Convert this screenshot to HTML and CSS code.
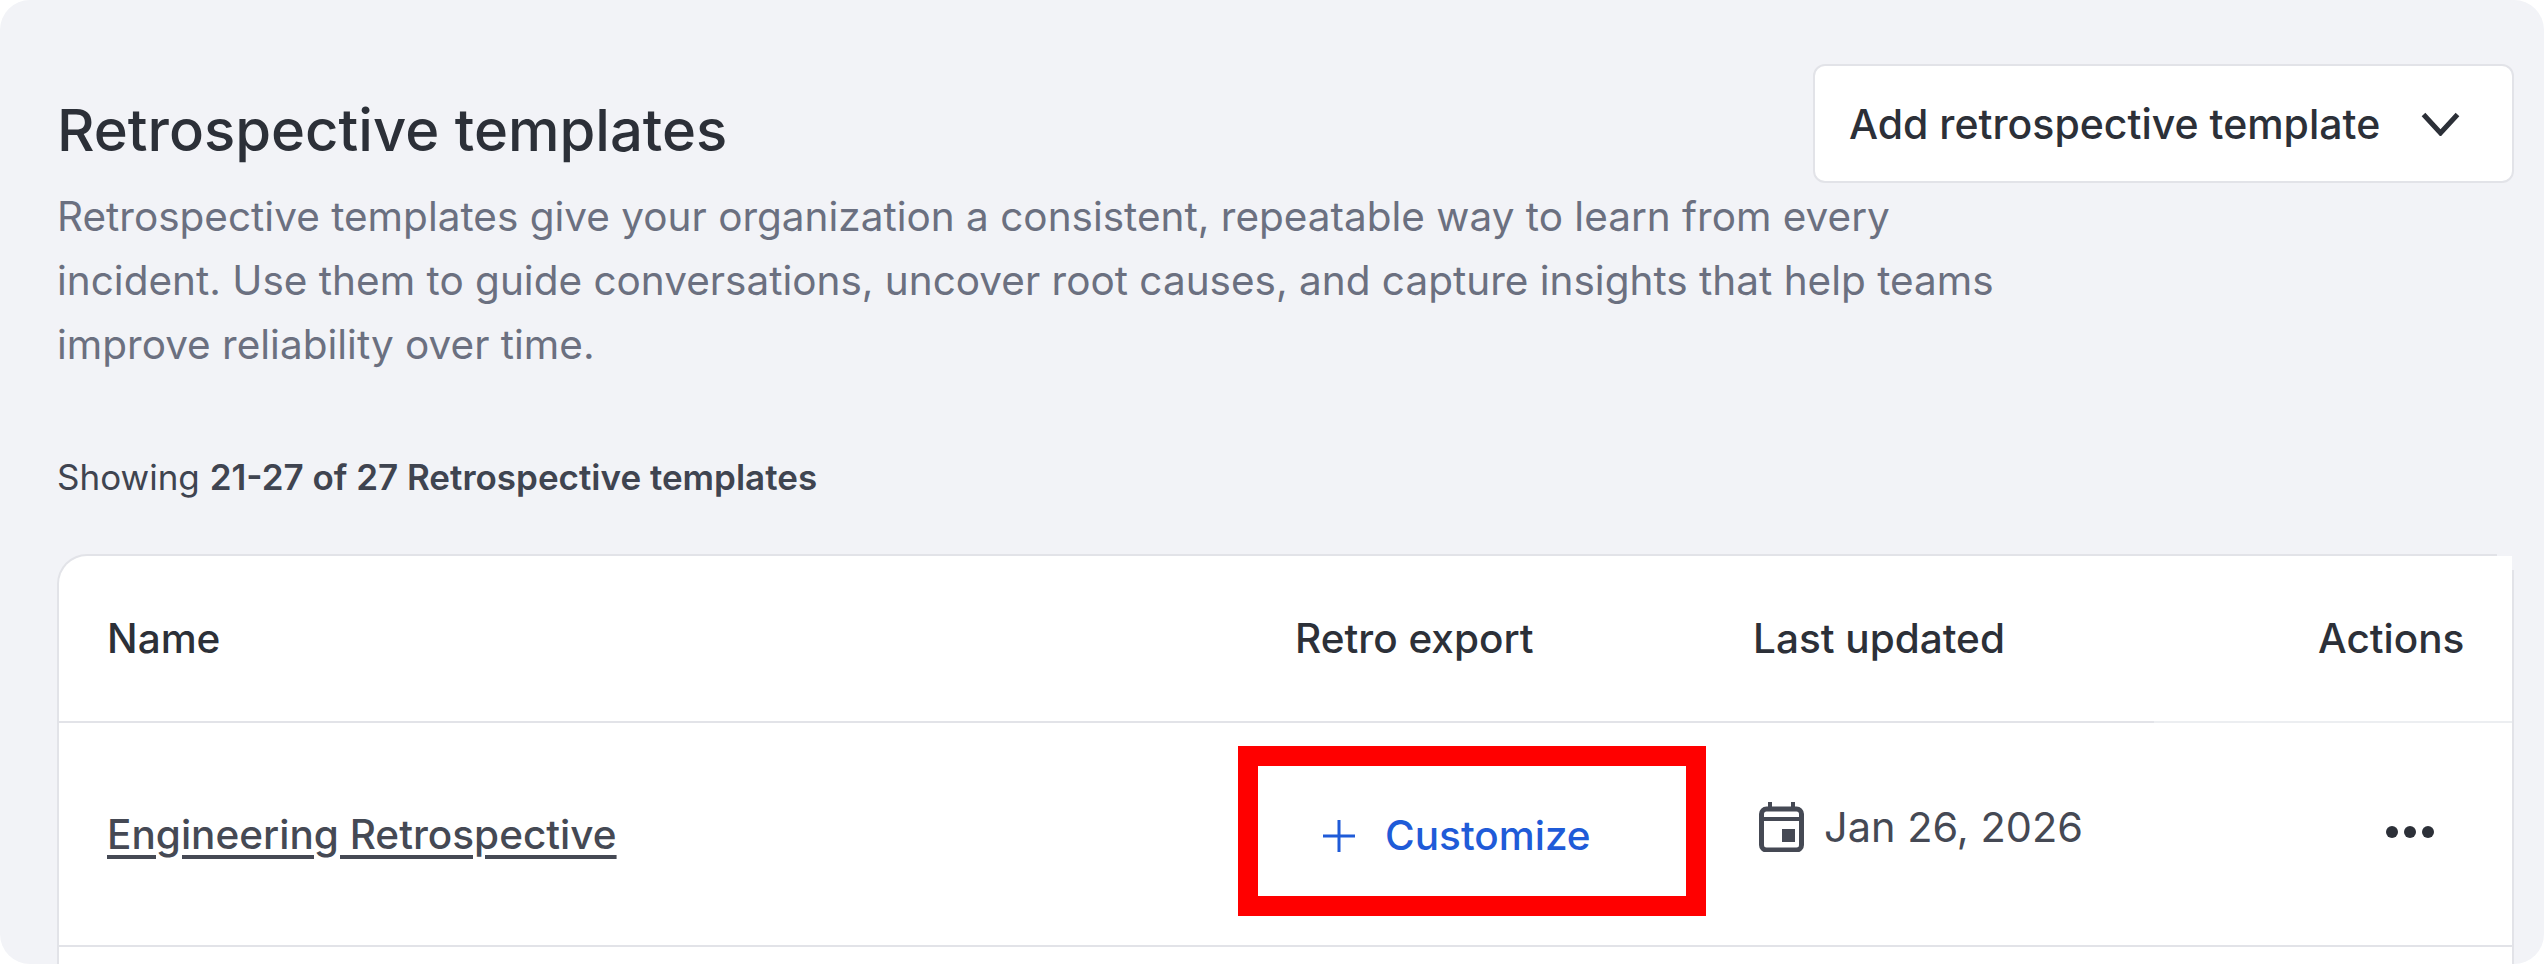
FILE: index.html
```html
<!DOCTYPE html>
<html lang="en">
<head>
  <meta charset="UTF-8" />
  <title>Retrospective templates</title>
  <link rel="stylesheet" href="styles.css">
</head>
<body>
  <div class="panel">
    <div class="head">
      <h2>Retrospective templates</h2>
      <button class="add-btn">
        <span>Add retrospective template</span>
        <svg class="chevron" viewBox="0 0 39 24" width="39" height="24"><path d="M2.5 2.5 19.5 21 36.5 2.5" fill="none" stroke="currentColor" stroke-width="5"/></svg>
      </button>
    </div>
    <p class="intro">Retrospective templates give your organization a consistent, repeatable way to learn from every incident. Use them to guide conversations, uncover root causes, and capture insights that help teams improve reliability over time.</p>

    <div class="showing">Showing <strong>21-27 of 27 Retrospective templates</strong></div>

    <div class="card">
      <div class="row row-head">
        <div>Name</div>
        <div>Retro export</div>
        <div>Last updated</div>
        <div>Actions</div>
      </div>
      <div class="row row-body">
        <div><a class="name-link" href="#">Engineering Retrospective</a></div>
        <div>
          <a class="customize" href="#">
            <svg viewBox="0 0 34 34" width="34" height="34"><path d="M17 1v32M1 17h32" fill="none" stroke="currentColor" stroke-width="3"/></svg>
            <span>Customize</span>
          </a>
        </div>
        <div class="date">
          <svg viewBox="0 0 45 50" width="45" height="50"><path d="M11 0v6M34 0v6" stroke="#454954" stroke-width="4" fill="none"/><rect x="2.5" y="7" width="40" height="41" rx="5" fill="none" stroke="#454954" stroke-width="5"/><path d="M2 17h41" stroke="#454954" stroke-width="4"/><rect x="23" y="27" width="13" height="13" fill="#454954"/></svg>
          <span>Jan 26, 2026</span>
        </div>
        <div class="dots"><i></i><i></i><i></i></div>
      </div>
      <div class="row row-empty"></div>
    </div>
  </div>
</body>
</html>
```

FILE: styles.css
```css
html, body {
  margin: 0;
  height: 100%;
  background: #fff;
  overflow: hidden;
}
body {
  font-family: Inter, "Liberation Sans", sans-serif;
  color: #2c3038;
}
.panel {
  box-sizing: border-box;
  height: 964px;
  padding: 64px 30px 0 57px;
  background: #f2f3f7;
  border-radius: 30px;
  overflow: hidden;
}
.head {
  display: flex;
  justify-content: space-between;
  align-items: center;
}
h2 {
  margin: 13px 0 0;
  font-size: 58px;
  line-height: 78px;
  font-weight: 450;
}
.intro {
  margin: 2px 0 0;
  width: 2000px;
  font-size: 40.5px;
  line-height: 64px;
  color: #6b7080;
}
.add-btn {
  display: flex;
  align-items: center;
  justify-content: space-between;
  box-sizing: border-box;
  width: 701px;
  height: 119px;
  padding: 0 52px 0 34px;
  background: #fff;
  border: 2px solid #e2e3e8;
  border-radius: 12px;
  font: 450 41px Inter, sans-serif;
  color: #2c3038;
}
.showing {
  margin-top: 80px;
  font-size: 35px;
  line-height: 40px;
  color: #3f4450;
}
.showing strong {
  font-weight: 600;
}
.card {
  position: relative;
  margin-top: 57px;
  background: #fff;
  border: 2px solid #e2e3e8;
  border-bottom: none;
  border-radius: 30px 0 0 0;
}
.card::after {
  content: "";
  position: absolute;
  top: -2px;
  right: -2px;
  width: 15px;
  height: 14px;
  background: #fff;
  border-top: 2px solid #f2f3f7;
  border-right: 2px solid #f2f3f7;
}
.row {
  position: relative;
  display: grid;
  grid-template-columns: 1236px 458px 565px 196px;
  align-items: center;
  border-bottom: 2px solid #e2e3e8;
}
.row > div:first-child {
  padding-left: 48px;
}
.row-head {
  height: 165px;
  font-size: 40.5px;
  font-weight: 450;
}
/* actions column keeps a lighter rule */
.row-head::after {
  content: "";
  position: absolute;
  left: 2095px;
  right: 0;
  bottom: -2px;
  height: 2px;
  background: #eceef1;
}
.row-body {
  height: 222px;
  font-size: 40.5px;
  color: #454954;
}
.row-empty {
  height: 100px;
  border-bottom: none;
}
.name-link {
  color: #454954;
  font-weight: 450;
  text-underline-offset: 6px;
  text-decoration-thickness: 4px;
}
.customize {
  position: relative;
  display: inline-flex;
  align-items: center;
  gap: 29px;
  margin-top: 6px;
  padding-left: 27px;
  color: #1f5bd8;
  font-weight: 450;
  text-decoration: none;
}
/* red highlight drawn over the screenshot */
.customize::after {
  content: "";
  position: absolute;
  left: -57px;
  top: -65px;
  width: 428px;
  height: 130px;
  border: 20px solid #f00;
}
.date {
  display: flex;
  align-items: center;
  gap: 20px;
  padding-left: 6px;
  margin-top: -14px;
  font-size: 41.5px;
}
.dots {
  display: flex;
  gap: 6px;
  padding-left: 68px;
  margin-top: -4px;
}
.dots i {
  width: 12px;
  height: 12px;
  border-radius: 50%;
  background: #2c3038;
}
```
